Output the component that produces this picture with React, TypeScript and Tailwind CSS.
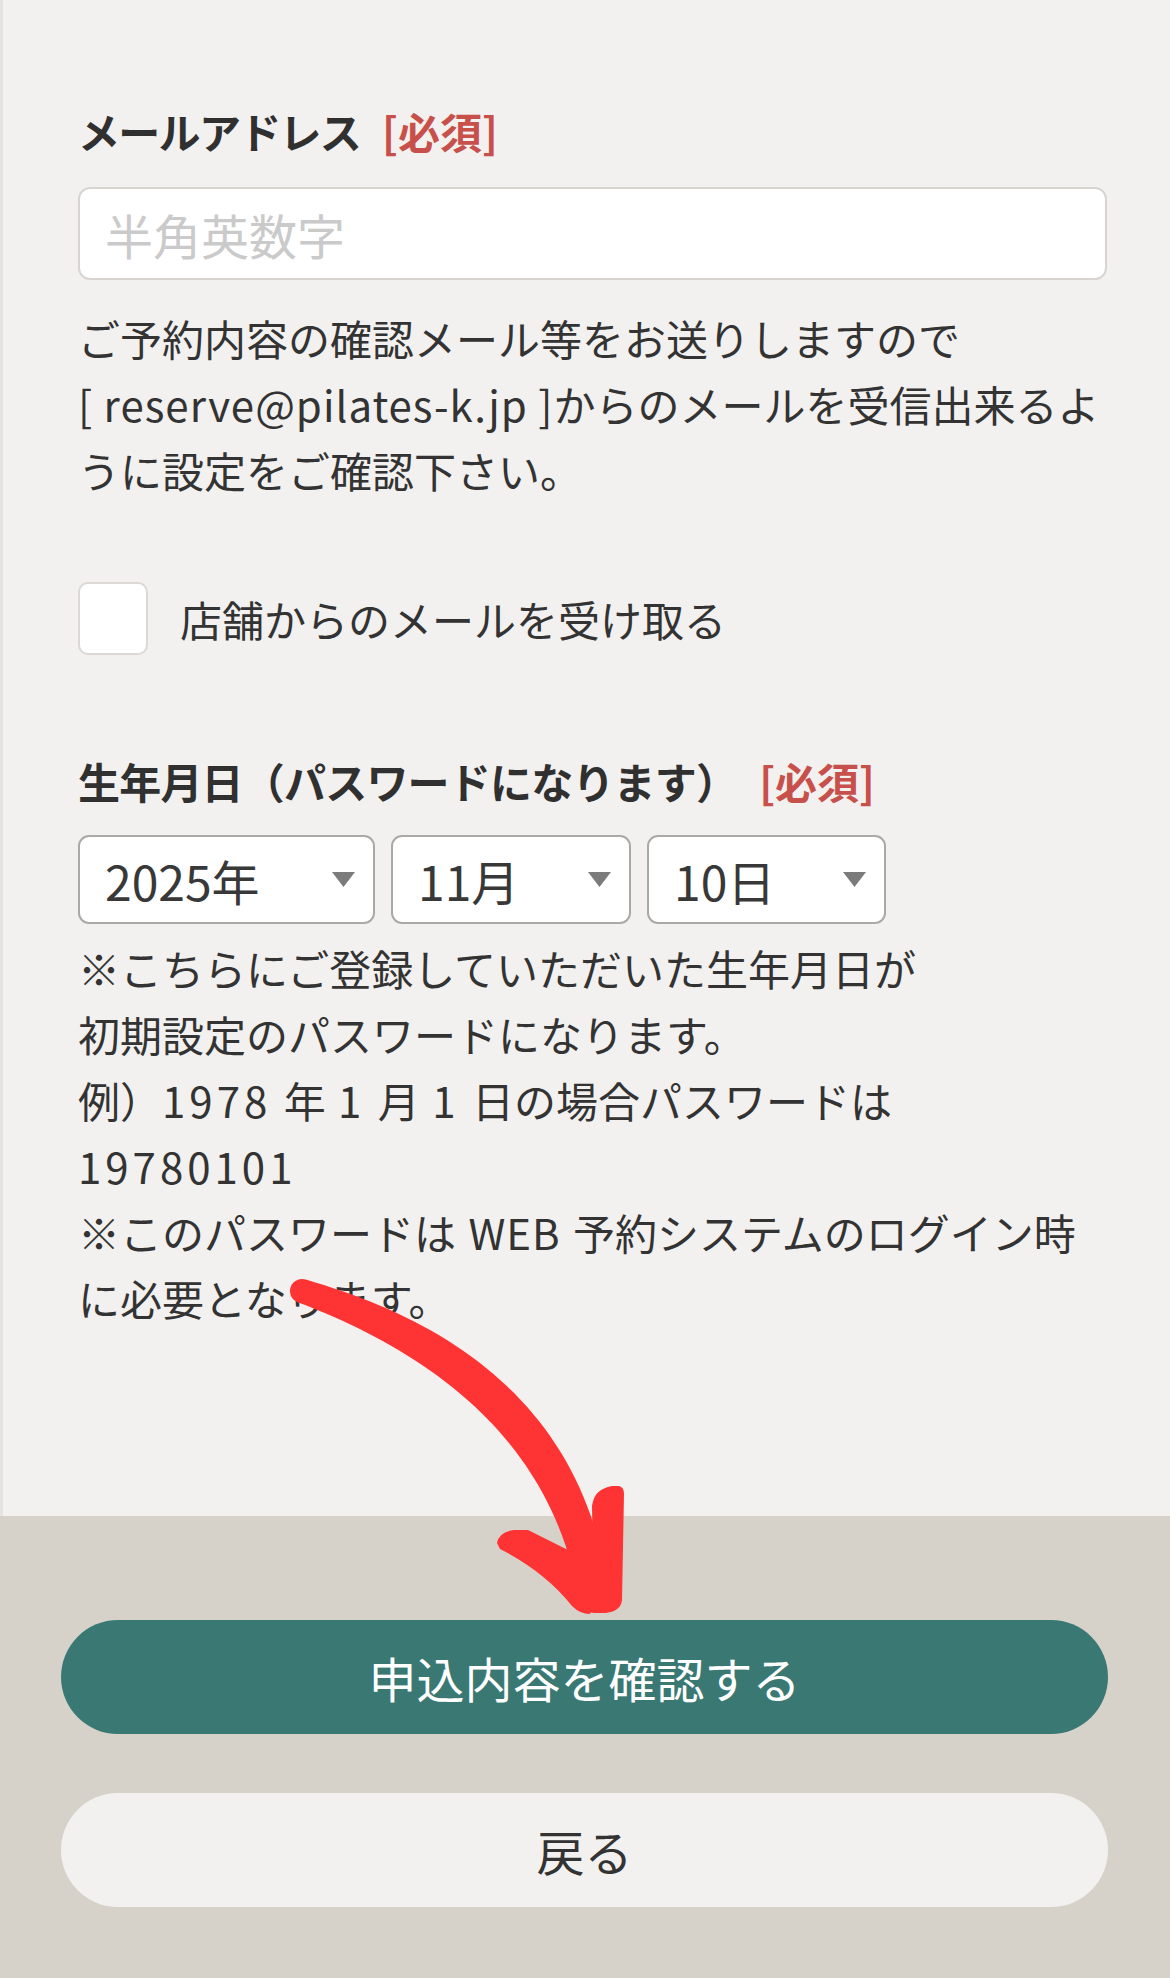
import React from "react";

// Hand-drawn red arrow: a tapered cubic curve plus a two-stroke head.
const CURVE: [number, number][] = [
  [302, 1291],
  [450, 1340],
  [570, 1430],
  [594, 1598],
];

function curveOutline() {
  const [p0, p1, p2, p3] = CURVE;
  const left: string[] = [];
  const right: string[] = [];
  const n = 48;
  for (let i = 0; i <= n; i++) {
    const t = i / n;
    const u = 1 - t;
    const x = u * u * u * p0[0] + 3 * u * u * t * p1[0] + 3 * u * t * t * p2[0] + t * t * t * p3[0];
    const y = u * u * u * p0[1] + 3 * u * u * t * p1[1] + 3 * u * t * t * p2[1] + t * t * t * p3[1];
    const dx = 3 * u * u * (p1[0] - p0[0]) + 6 * u * t * (p2[0] - p1[0]) + 3 * t * t * (p3[0] - p2[0]);
    const dy = 3 * u * u * (p1[1] - p0[1]) + 6 * u * t * (p2[1] - p1[1]) + 3 * t * t * (p3[1] - p2[1]);
    const len = Math.hypot(dx, dy) || 1;
    const w = (24 + 10 * Math.sin(Math.PI * t) + 6 * t) / 2;
    const nx = -dy / len;
    const ny = dx / len;
    left.push(`${(x + nx * w).toFixed(1)},${(y + ny * w).toFixed(1)}`);
    right.push(`${(x - nx * w).toFixed(1)},${(y - ny * w).toFixed(1)}`);
  }
  return `M${left.join(" L")} L${right.reverse().join(" L")} Z`;
}

function RedArrow() {
  return (
    <svg
      className="pointer-events-none absolute left-0 top-0"
      width={1170}
      height={1978}
      viewBox="0 0 1170 1978"
    >
      <g fill="#fe3333">
        <path d={curveOutline()} />
        <circle cx={302} cy={1291} r={12} />
        <circle cx={594} cy={1598} r={15} />
        <path d="M592,1506 Q594,1489 612,1486 L619,1486 Q624,1487 624,1494 L622,1600 Q621,1611 606,1613 L594,1613 Z" />
        <path d="M497,1543 Q499,1532 514,1530 L528,1530 L574,1553 L596,1598 L590,1614 Q580,1614 572,1606 Q545,1572 500,1549 Z" />
      </g>
    </svg>
  );
}

function Required() {
  return <span className="ml-[22px] tracking-normal text-[#c8504b]">[必須]</span>;
}

// digits in the original font run wider than Noto's
function Num({ children }: { children: React.ReactNode }) {
  return <span className="tracking-[4px]">{children}</span>;
}

function DateSelect({ value, width }: { value: string; width: string }) {
  return (
    <div
      className={`${width} flex h-[89px] items-center justify-between rounded-[11px] border-[2.5px] border-[#aaa9a7] bg-white pl-[25px] pr-[18px]`}
    >
      <span className="text-[48px] leading-none text-[#383838]">{value}</span>
      <svg width="23" height="15" viewBox="0 0 23 15">
        <path d="M0 0 H23 L11.5 15 Z" fill="#7b7b7b" />
      </svg>
    </div>
  );
}

export default function App() {
  return (
    <div className="relative min-h-[1978px] w-[1170px] bg-[#d6d2ca] font-['Noto_Sans_CJK_JP','Noto_Sans',sans-serif] text-[#333]">
      <main className="h-[1516px] border-l-[3px] border-[#e5e3e0] bg-[#f2f1ef] pl-[75px] pr-[63px] pt-[101px]">
        <h2 className="h-[60px] text-[42px] font-bold leading-[60px] tracking-[-1.7px] text-[#303030]">
          メールアドレス
          <Required />
        </h2>
        <input
          type="email"
          placeholder="半角英数字"
          className="mt-[26px] block h-[93px] w-full rounded-[12px] border-[2.5px] border-[#d8d5d1] bg-white pl-[25px] text-[48px] outline-none placeholder:text-[#cacaca]"
        />
        <p className="mt-[25px] text-[42px] leading-[66px]">
          ご予約内容の確認メール等をお送りしますので
          <br />
          <span className="tracking-[1px]">[ reserve@pilates-k.jp ]</span>からのメールを受信出来るよ
          <br />
          うに設定をご確認下さい。
        </p>

        <label className="mt-[79px] flex items-center gap-[32px]">
          <span className="h-[73px] w-[70px] rounded-[10px] border-2 border-[#dcd9d5] bg-white" />
          <span className="text-[42px] leading-[60px]">店舗からのメールを受け取る</span>
        </label>

        <h2 className="mt-[96px] h-[60px] text-[42px] font-bold leading-[60px] tracking-[-0.8px] text-[#303030]">
          生年月日（パスワードになります）
          <Required />
        </h2>
        <div className="mt-[24px] flex gap-[16px]">
          <DateSelect value="2025年" width="w-[297px]" />
          <DateSelect value="11月" width="w-[240px]" />
          <DateSelect value="10日" width="w-[239px]" />
        </div>
        <p className="mt-[11px] text-[42px] leading-[66px] [word-spacing:3px]">
          ※こちらにご登録していただいた生年月日が
          <br />
          初期設定のパスワードになります。
          <br />
          例）<Num>1978</Num> 年 <Num>1</Num> 月 <Num>1</Num> 日の場合パスワードは
          <br />
          <Num>19780101</Num>
          <br />
          ※このパスワードは <span className="tracking-[1px]">WEB</span> 予約システムのログイン時
          <br />
          に必要となります。
        </p>
      </main>

      <footer className="flex flex-col gap-[59px] pb-[71px] pl-[61px] pr-[62px] pt-[104px]">
        <button className="h-[114px] w-full rounded-full bg-[#3a7873] text-[48px] text-white">
          申込内容を確認する
        </button>
        <button className="h-[114px] w-full rounded-full bg-[#f2f1ef] text-[48px] text-[#333]">
          戻る
        </button>
      </footer>

      <RedArrow />
    </div>
  );
}
